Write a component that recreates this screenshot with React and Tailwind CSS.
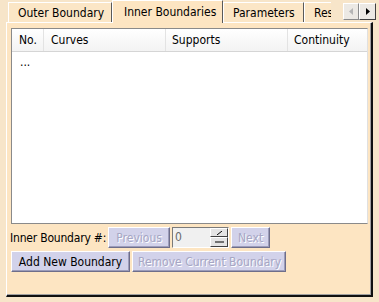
import { useState } from 'react';
import clsx from 'clsx';

const tabs = ['Outer Boundary', 'Inner Boundaries', 'Parameters', 'Results'];

// Раскрашенная кнопка в старом 3D-стиле
function Btn({ children, disabled, className }) {
  return (
    <button
      type="button"
      disabled={disabled}
      className={clsx(
        'h-[21px] px-[5px] bg-[#d2d2ea] border border-t-white border-l-white border-r-[#6e6e8a] border-b-[#6e6e8a]',
        'shadow-[inset_-1px_-1px_0_#9c9cba] leading-none whitespace-nowrap',
        disabled ? 'text-[#a6a6c4] [text-shadow:1px_1px_0_#ffffff]' : 'text-black',
        className
      )}
    >
      {children}
    </button>
  );
}

function App() {
  const [active] = useState(1);

  return (
    <div
      className="relative w-[379px] h-[302px] overflow-hidden bg-[#f7e5c9] text-[12px] text-black"
      style={{ fontFamily: 'Tahoma, "DejaVu Sans Condensed", "Liberation Sans", sans-serif' }}
    >
      {/* Вкладки */}
      <div className="flex items-end h-[22px] pl-[8px] relative z-10">
        {tabs.map((t, i) => (
          <div
            key={t}
            className={clsx(
              'flex items-center border-l border-t border-r border-l-white border-t-white border-r-[#5a5a5a] bg-[#fbe6c6] whitespace-nowrap overflow-hidden',
              i === active ? 'h-[23px] -mb-px bg-[#fde5c2] px-[11px]' : 'h-[20px] px-[9px]',
              i === 0 && 'w-[104px]',
              i === 1 && 'w-[111px]',
              i === 2 && 'w-[81px]',
              i === 3 && 'w-[27px] px-[4px] border-r-0'
            )}
          >
            {t}
          </div>
        ))}
      </div>

      {/* Стрелки прокрутки вкладок */}
      <div className="absolute top-[3px] left-[343px] flex z-20">
        <div className="w-[16px] h-[17px] bg-[#ece9e4] border border-white border-r-[#8a8a8a] border-b-[#8a8a8a] flex items-center justify-center">
          <svg width="4" height="7" viewBox="0 0 4 7"><path d="M4 0v7L0 3.5z" fill="#b5b5b5" /></svg>
        </div>
        <div className="w-[17px] h-[17px] bg-[#ece9e4] border border-white border-r-[#404040] border-b-[#404040] flex items-center justify-center">
          <svg width="4" height="7" viewBox="0 0 4 7"><path d="M0 0v7l4-3.5z" fill="#000" /></svg>
        </div>
      </div>

      {/* Панель */}
      <div className="ml-[6px] w-[367px] h-[275px] bg-[#fde5c2] border-l border-t border-l-white border-t-white border-r-2 border-b-2 border-r-[#101010] border-b-[#101010] shadow-[inset_-1px_-1px_0_#a0a0a0] pl-[4px] pt-[5px]">
        {/* Таблица */}
        <div className="w-[357px] h-[196px] bg-white border border-t-[#8a8a8a] border-l-[#8a8a8a] border-r-[#e0e0e0] border-b-[#8a8a8a]">
          <div className="flex h-[23px] bg-gradient-to-b from-white to-[#f3f3f3] border-b border-[#d5d5d5]">
            <div className="w-[32px] border-r border-[#e3e3e3] flex items-center pl-[7px]">No.</div>
            <div className="w-[122px] border-r border-[#e3e3e3] flex items-center pl-[7px]">Curves</div>
            <div className="w-[122px] border-r border-[#e3e3e3] flex items-center pl-[6px]">Supports</div>
            <div className="flex-1 flex items-center pl-[6px]">Continuity</div>
          </div>
          <div className="pl-[8px] pt-[2px] leading-[16px]">...</div>
        </div>

        {/* Навигация по границам */}
        <div className="flex items-center h-[21px] mt-[3px] -ml-[1px]">
          <span className="shrink-0 whitespace-nowrap tracking-[-0.2px] mr-[2px]">Inner Boundary #:</span>
          <Btn disabled className="w-[62px]">Previous</Btn>
          <div className="ml-[2px] flex h-[21px] w-[57px] bg-[#f0f0f0] border border-t-[#7a7a7a] border-l-[#7a7a7a] border-r-white border-b-white">
            <span className="flex-1 pl-[2px] leading-[19px] text-[#6a6a6a]">0</span>
            <div className="flex flex-col w-[18px]">
              <div className="h-[9px] bg-[#e4e4e4] border border-white border-r-[#404040] border-b-[#404040] flex items-center justify-center">
                <svg width="7" height="4" viewBox="0 0 7 4"><path d="M1 4 6 0" stroke="#000" strokeWidth="1" /></svg>
              </div>
              <div className="h-[10px] bg-[#e4e4e4] border border-white border-r-[#404040] border-b-[#404040] flex items-center justify-center">
                <svg width="9" height="2" viewBox="0 0 9 2"><path d="M0 1h9" stroke="#000" strokeWidth="1" /></svg>
              </div>
            </div>
          </div>
          <Btn disabled className="ml-[2px] w-[39px]">Next</Btn>
        </div>

        {/* Действия */}
        <div className="flex items-center gap-[2px] mt-[3px]">
          <Btn className="w-[119px]">Add New Boundary</Btn>
          <Btn disabled className="w-[154px]">Remove Current Boundary</Btn>
        </div>
      </div>
    </div>
  );
}

export default App;
